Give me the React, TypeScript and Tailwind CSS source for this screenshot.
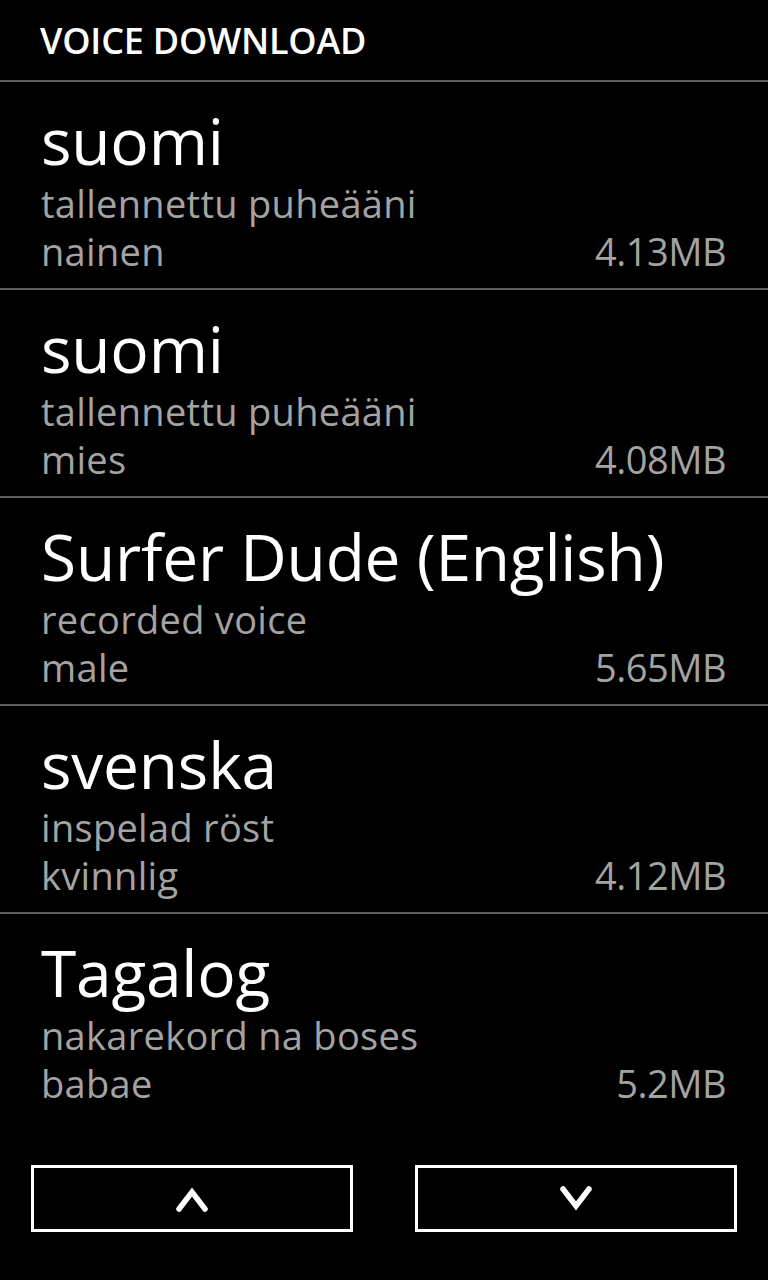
import React from 'react';

type Voice = {
  name: string;
  kind: string;
  gender: string;
  size: string;
};

const voices: Voice[] = [
  { name: 'suomi', kind: 'tallennettu puheääni', gender: 'nainen', size: '4.13MB' },
  { name: 'suomi', kind: 'tallennettu puheääni', gender: 'mies', size: '4.08MB' },
  { name: 'Surfer Dude (English)', kind: 'recorded voice', gender: 'male', size: '5.65MB' },
  { name: 'svenska', kind: 'inspelad röst', gender: 'kvinnlig', size: '4.12MB' },
  { name: 'Tagalog', kind: 'nakarekord na boses', gender: 'babae', size: '5.2MB' },
];

const Chevron: React.FC<{ up?: boolean }> = ({ up }) => (
  <svg width="32" height="28" viewBox="0 0 32 28" fill="none">
    <polyline
      points={up ? '3,24 16,7 29,24' : '3,4 16,21 29,4'}
      stroke="white"
      strokeWidth="5.5"
      strokeLinejoin="miter"
      strokeLinecap="round"
    />
  </svg>
);

const App: React.FC = () => {
  return (
    <div
      className="min-h-screen w-full bg-black text-white flex flex-col"
      style={{ fontFamily: '"Open Sans", "Noto Sans", sans-serif' }}
    >
      <div className="px-[40px] pt-[21px] pb-[19px] border-b-2 border-[#5e5e5e]">
        <h1 className="text-[36px] leading-[40px] font-semibold tracking-[-0.2px]">VOICE DOWNLOAD</h1>
      </div>

      <ul>
        {voices.map((v, i) => (
          <li
            key={i}
            className={
              'pl-[41px] pr-[42px] pt-[25px] pb-[13px] border-b-2 ' +
              (i < voices.length - 1 ? 'border-[#5e5e5e]' : 'border-transparent')
            }
          >
            <div className="text-[64px] leading-[68px] mb-[4px] -tracking-[0.2px]">{v.name}</div>
            <div className="text-[38px] leading-[48px] text-[#a3a3a3] tracking-[0.3px]">{v.kind}</div>
            <div className="flex justify-between text-[38px] leading-[48px] text-[#a3a3a3] tracking-[0.3px]">
              <span>{v.gender}</span>
              <span className="tracking-[-0.5px]">{v.size}</span>
            </div>
          </li>
        ))}
      </ul>

      <div className="flex gap-[62px] px-[31px] mt-[43px]">
        <button className="flex-1 h-[67px] border-[3px] border-white flex items-center justify-center">
          <Chevron up />
        </button>
        <button className="flex-1 h-[67px] border-[3px] border-white flex items-center justify-center">
          <Chevron />
        </button>
      </div>
    </div>
  );
};

export default App;
